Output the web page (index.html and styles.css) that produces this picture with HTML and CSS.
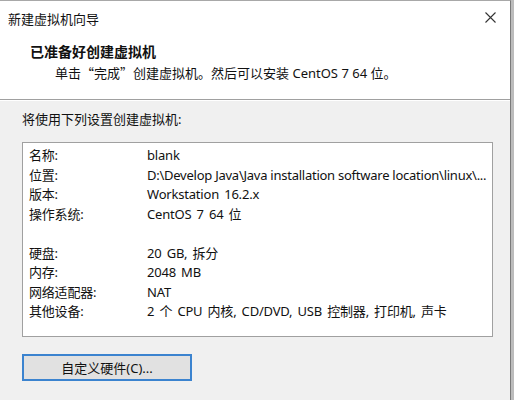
FILE: index.html
```html
<!DOCTYPE html>
<html lang="zh-CN">
<head>
    <meta charset="UTF-8">
    <title>新建虚拟机向导</title>
    <link rel="stylesheet" href="styles.css">
</head>
<body>
    <div class="window">
        <div class="header">
            <div class="titlebar">
                <span class="title">新建虚拟机向导</span>
                <svg class="close" width="11" height="11" viewBox="0 0 11 11">
                    <path d="M0.5 0.5L10.5 10.5M10.5 0.5L0.5 10.5" stroke="#333" stroke-width="1.1" fill="none"/>
                </svg>
            </div>
            <div class="heading">已准备好创建虚拟机</div>
            <div class="subheading">单击<span class="q">“</span>完成<span class="q">”</span>创建虚拟机。然后可以安装 CentOS 7 64 位。</div>
        </div>
        <div class="content">
            <div class="intro">将使用下列设置创建虚拟机:</div>
            <div class="summary">
                <span>名称:</span><span>blank</span>
                <span>位置:</span><span class="path">D:\Develop Java\Java installation software location\linux\...</span>
                <span>版本:</span><span>Workstation 16.2.x</span>
                <span>操作系统:</span><span>CentOS 7 64 位</span>
                <span class="blank"></span><span class="blank"></span>
                <span>硬盘:</span><span>20 GB, 拆分</span>
                <span>内存:</span><span>2048 MB</span>
                <span>网络适配器:</span><span>NAT</span>
                <span>其他设备:</span><span>2 个 CPU 内核, CD/DVD, USB 控制器, 打印机, 声卡</span>
            </div>
            <button class="btn">自定义硬件(C)...</button>
        </div>
    </div>
</body>
</html>
```

FILE: styles.css
```css
body {
    margin: 0;
    background: #bcbcbc;
    font-family: "Noto Sans", "Noto Sans CJK SC", sans-serif;
    font-size: 13px;
    color: #111;
}
.window {
    width: 510px;
    height: 399px;
    border-top: 1px solid #a8a8a8;
    border-right: 1px solid #7a7a7a;
    background: #f0f0f0;
    overflow: hidden;
}
.header {
    background: #fff;
    height: 98px;
    border-bottom: 1px solid #a0a0a0;
    box-shadow: 0 1px 0 #fff;
}
.titlebar {
    display: flex;
    justify-content: space-between;
    align-items: center;
    height: 35px;
    padding: 0 14px 0 8px;
}
.title {
    line-height: 18px;
}
.close {
    margin-top: -2px;
}
.heading {
    font-weight: bold;
    font-size: 14px;
    padding-left: 30px;
    line-height: 20px;
    margin-top: 6px;
}
.subheading {
    padding-left: 55px;
    line-height: 20px;
    margin-top: 1px;
}
.q {
    font-family: "Noto Sans CJK SC", sans-serif;
}
.content {
    padding: 9px 17px 0 22px;
}
.intro {
    line-height: 20px;
}
.summary {
    margin-top: 13px;
    background: #fff;
    border: 1px solid #a0a0a0;
    padding: 3px 6px 14px 6px;
    display: grid;
    grid-template-columns: 118px 1fr;
    line-height: 19.5px;
    white-space: nowrap;
    letter-spacing: -0.2px;
    word-spacing: 2px;
}
.summary .path {
    letter-spacing: -0.25px;
    word-spacing: 0;
}
.blank {
    height: 19.5px;
}
.btn {
    margin-top: 17px;
    width: 170px;
    height: 27px;
    background: #e1e1e1;
    border: 2px solid #3b83cf;
    font-family: inherit;
    font-size: 13px;
    color: #111;
    padding: 0;
}
```
